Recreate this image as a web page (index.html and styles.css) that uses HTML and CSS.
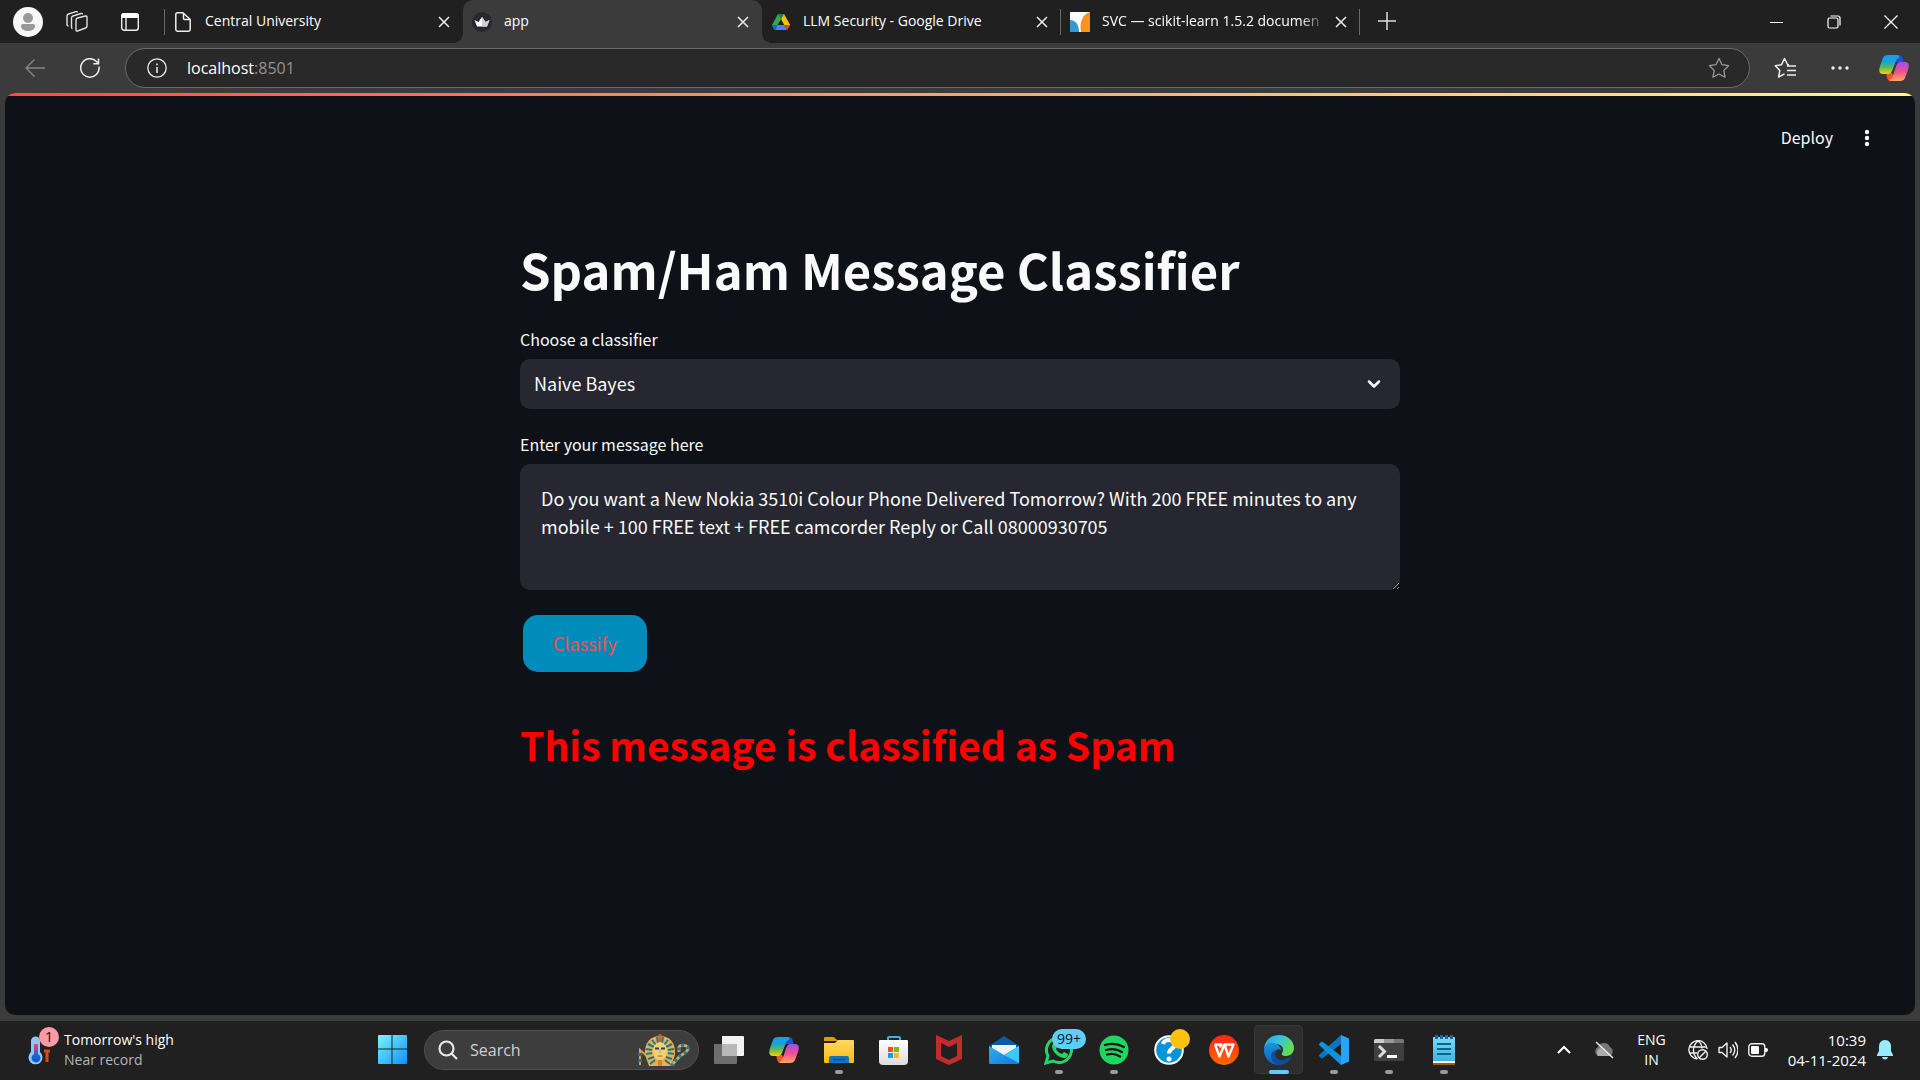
FILE: index.html
```html
<!DOCTYPE html>
<html lang="en">
<head>
<meta charset="utf-8">
<title>app</title>
<link rel="stylesheet" href="styles.css">
</head>
<body>
<svg class="defs" width="0" height="0" aria-hidden="true">
  <defs>
    <linearGradient id="cpLeft" x1="0" y1="0" x2="0" y2="1"><stop offset="0" stop-color="#1d9bf0"/><stop offset=".35" stop-color="#16a3d8"/><stop offset=".65" stop-color="#5cb85a"/><stop offset="1" stop-color="#ffd000"/></linearGradient>
    <linearGradient id="cpRight" x1="0" y1="0" x2="0" y2="1"><stop offset="0" stop-color="#a34df0"/><stop offset=".5" stop-color="#ee5090"/><stop offset="1" stop-color="#ffa860"/></linearGradient>
    <linearGradient id="win" x1="0" y1="0" x2="1" y2="1"><stop offset="0" stop-color="#7df3ff"/><stop offset="1" stop-color="#0a93ff"/></linearGradient>
    <linearGradient id="folder" x1="0" y1="0" x2="0" y2="1"><stop offset="0" stop-color="#ffd95e"/><stop offset="1" stop-color="#fdb813"/></linearGradient>
    <linearGradient id="bag" x1="0" y1="0" x2="0" y2="1"><stop offset="0" stop-color="#fff"/><stop offset="1" stop-color="#dcdcdc"/></linearGradient>
    <linearGradient id="mail" x1="0" y1="0" x2="1" y2="1"><stop offset="0" stop-color="#2bb0f0"/><stop offset="1" stop-color="#1677d8"/></linearGradient>
    <linearGradient id="wps" x1="0" y1="0" x2="0" y2="1"><stop offset="0" stop-color="#ff2416"/><stop offset="1" stop-color="#ff6a00"/></linearGradient>
    <linearGradient id="edgeTop" x1="0" y1="0" x2="1" y2=".5"><stop offset="0" stop-color="#2a9fe6"/><stop offset=".5" stop-color="#35c3df"/><stop offset="1" stop-color="#65dd4e"/></linearGradient>
    <linearGradient id="edgeLow" x1="0" y1="0" x2="0" y2="1"><stop offset="0" stop-color="#1b94e0"/><stop offset="1" stop-color="#0b62bd"/></linearGradient>
    <linearGradient id="note" x1="0" y1="0" x2="0" y2="1"><stop offset="0" stop-color="#78dcf5"/><stop offset="1" stop-color="#3fb4dc"/></linearGradient>
    <linearGradient id="thermo" x1="0" y1="0" x2="0" y2="1"><stop offset="0" stop-color="#ff4068"/><stop offset=".6" stop-color="#1767d8"/><stop offset="1" stop-color="#0a58cc"/></linearGradient>
    <symbol id="copilot" viewBox="0 0 30 28">
      <path fill="#f0562c" d="M7 18l6 1 4 8h-6c-2 0-3-2-4-9z"/>
      <path fill="#1558d6" d="M15 1h5c3 0 3.500 2 4.500 7h-7l-4 2z"/>
      <path fill="url(#cpLeft)" d="M9 1h9c2 0 2.500 1 2 3-2 .500-3 2-3.500 4L13 17c-1 2-2 3-4 3H4c-4 0-4.500-3-3-8l3-8c1-2.300 2.500-3 5-3z"/>
      <path fill="url(#cpRight)" d="M21 27h-9c-1 0-1.500-.5-1-1.500 2-.5 2.500-2 3-4L17.500 11c1-2 2-3 4-3H26c4 0 4.500 3 3 8l-3 8c-1 2.300-2.500 3-5 3z"/>
    </symbol>
    <symbol id="cross" viewBox="0 0 20 20"><path d="M5 5l10 10M15 5L5 15" fill="none" stroke="#eee" stroke-width="1.500"/></symbol>
  </defs>
</svg>

<header class="tabstrip">
  <div class="strip-tools">
    <button class="icon-btn" aria-label="Profile"><svg width="30" height="30" viewBox="0 0 30 30"><circle cx="15" cy="15" r="15" fill="#f7f7f7"/><circle cx="15" cy="11" r="5" fill="#999"/><path d="M8 19q0-2 2-2h10q2 0 2 2c0 3-3 5-7 5s-7-2-7-5z" fill="#999"/></svg></button>
    <button class="icon-btn" aria-label="Workspaces"><svg width="22" height="22" viewBox="0 0 22 22" fill="none" stroke="#e0e0e0" stroke-width="1.400" stroke-linejoin="round"><path d="M10 9q0-1.500 1.500-2l8-2q1.500-.3 1.500 1v9q0 1.500-1.500 2l-8 3q-1.500.5-1.500-1z"/><path d="M6.500 17.500q-1 0-1-1.500V7q0-1.500 1.500-2l8-2.500q1.500-.5 1.500 1M2.500 15q-1.500 0-1.500-1.500V5q0-1.500 1.500-2l7.500-2.300q1.500-.3 1.500.8"/></svg></button>
    <button class="icon-btn" aria-label="Tab actions"><svg width="20" height="20" viewBox="0 0 20 20"><rect x="1.700" y="1.700" width="16.600" height="16.600" rx="2.500" fill="none" stroke="#eee" stroke-width="1.400"/><path d="M1 6V4q0-3 3-3h12q3 0 3 3v2z" fill="#fff"/><path d="M6 6v12" stroke="#eee" stroke-width="1.400"/></svg></button>
  </div>
  <div class="tab ruled-left">
    <svg class="tab-icon" viewBox="0 0 20 20" fill="none" stroke="#eee" stroke-width="1.500" stroke-linejoin="round"><path d="M10 .8H4.500Q2.800.8 2.800 2.500v15q0 1.700 1.700 1.700h11q1.700 0 1.700-1.700V7.500zM10.500.8v5.500q0 1.200 1.200 1.200h5.500"/></svg>
    <span class="tab-title">Central University</span>
    <button class="icon-btn" aria-label="Close tab"><svg width="20" height="20"><use href="#cross"/></svg></button>
  </div>
  <div class="tab active">
    <svg class="tab-icon" viewBox="0 0 20 20"><circle cx="10" cy="10" r="10" fill="#262730"/><path d="M2.500 8l4 2L10 5l3.500 5 4-2-2.500 6.500H5z" fill="#fff"/><path d="M10 5l3.500 5 4-2-2.500 6.500h-5z" fill="#cfcfcf"/></svg>
    <span class="tab-title">app</span>
    <button class="icon-btn" aria-label="Close tab"><svg width="20" height="20"><use href="#cross"/></svg></button>
  </div>
  <div class="tab ruled">
    <svg class="tab-icon" viewBox="0 0 20 20"><path fill="#34a853" d="M7 2h6L6 14l-2.800 4L1 13z"/><path fill="#188038" d="M7 2h6l-3 5z"/><path fill="#fbbc04" d="M13 2l6.200 11h-6L10 7z"/><path fill="#4285f4" d="M6.500 13h7l2.500 5H4z"/><path fill="#ea4335" d="M13.500 13h5.700l-2.800 5z"/><path fill="#1967d2" d="M6.500 13L3.600 18 1 13z"/></svg>
    <span class="tab-title">LLM Security - Google Drive</span>
    <button class="icon-btn" aria-label="Close tab"><svg width="20" height="20"><use href="#cross"/></svg></button>
  </div>
  <div class="tab ruled">
    <svg class="tab-icon" viewBox="0 0 20 20"><path fill="#fff" d="M0 0h20v20H0z"/><path fill="#3499cd" d="M0 8c5 0 9 4 9 12H0z"/><path fill="#f7931e" d="M20 0v20h-9C9 10 13 2 20 0z"/></svg>
    <span class="tab-title faded">SVC — scikit-learn 1.5.2 documen</span>
    <button class="icon-btn" aria-label="Close tab"><svg width="20" height="20"><use href="#cross"/></svg></button>
  </div>
  <button class="icon-btn new-tab" aria-label="New tab"><svg width="18" height="18" viewBox="0 0 18 18"><path d="M9 0v18M0 9h18" stroke="#ddd" stroke-width="1.500"/></svg></button>
  <div class="window-buttons">
    <button class="icon-btn" aria-label="Minimize"><svg width="14" height="14" viewBox="0 0 14 14"><path d="M0 7.500h13" stroke="#fff"/></svg></button>
    <button class="icon-btn" aria-label="Restore"><svg width="14" height="14" viewBox="0 0 14 14" fill="none" stroke="#fff" stroke-width="1.200"><rect x="1" y="3" width="10" height="10" rx="1.500"/><path d="M3.500 1H11q2 0 2 2v7.500"/></svg></button>
    <button class="icon-btn" aria-label="Close"><svg width="14" height="14" viewBox="0 0 14 14"><path d="M.5.500l13 13M13.500.500l-13 13" stroke="#fff" stroke-width="1.200"/></svg></button>
  </div>
</header>

<nav class="toolbar">
  <button class="icon-btn tool" aria-label="Back"><svg width="20" height="18" viewBox="0 0 20 18" fill="none" stroke="#858585" stroke-width="1.400"><path d="M20 9H1M9.500.5L1 9l8.500 8.500"/></svg></button>
  <button class="icon-btn tool" aria-label="Refresh"><svg width="20" height="20" viewBox="0 0 20 20" fill="none" stroke="#eee" stroke-width="1.500"><path d="M19 8.500A9.200 9.200 0 1 1 16.500 3.500L18.500 5.500M18.500.5v5.200h-5.200"/></svg></button>
  <div class="address">
    <svg width="20" height="20" viewBox="0 0 20 20" fill="none" stroke="#eee" stroke-width="1.300"><circle cx="10" cy="10" r="9.200"/><path d="M10 9v6M10 5.500v1.800" stroke-width="1.500"/></svg>
    <a class="url" href="#app">localhost<span class="port">:8501</span></a>
    <button class="icon-btn" aria-label="Add to favorites"><svg width="22" height="22" viewBox="0 0 22 22" fill="none" stroke="#9a9a9a" stroke-width="1.300" stroke-linejoin="round"><path d="M11 1.500l3 6.200 6.600 1-4.800 4.700 1.200 6.800-6-3.200-6 3.200 1.200-6.800L1.400 8.700l6.600-1z"/></svg></button>
  </div>
  <button class="icon-btn tool" aria-label="Favorites"><svg width="22" height="22" viewBox="0 0 22 22" fill="none" stroke="#eee" stroke-width="1.500" stroke-linejoin="round"><path d="M15 8L13.500 7.500 10.500 1.500 7.500 7.700l-6.200 1 4.500 4.700L4.600 20l5.900-3.200M13 9h9M13 13.500h9M13 18h9"/></svg></button>
  <button class="icon-btn tool" aria-label="Settings and more"><svg width="18" height="4" viewBox="0 0 18 4" fill="#eee"><circle cx="2" cy="2" r="1.700"/><circle cx="9" cy="2" r="1.700"/><circle cx="16" cy="2" r="1.700"/></svg></button>
  <button class="icon-btn tool" aria-label="Copilot"><svg width="30" height="28"><use href="#copilot"/></svg></button>
</nav>

<div class="frame">
  <main class="app" id="app">
    <div class="app-header">
      <button class="deploy">Deploy</button>
      <button class="icon-btn" aria-label="Main menu"><svg width="20" height="20" viewBox="0 0 20 20" fill="#fafafa"><circle cx="10" cy="4" r="2.200"/><circle cx="10" cy="10" r="2.200"/><circle cx="10" cy="16" r="2.200"/></svg></button>
    </div>
    <form class="block" onsubmit="return false">
      <h1>Spam/Ham Message Classifier</h1>
      <label for="classifier">Choose a classifier</label>
      <div class="select-wrap">
        <select id="classifier"><option>Naive Bayes</option></select>
        <svg width="14" height="10" viewBox="0 0 14 10" fill="none" stroke="#fafafa" stroke-width="2.500" stroke-linecap="round" stroke-linejoin="round"><path d="M2 2.500l5 5 5-5"/></svg>
      </div>
      <label for="message">Enter your message here</label>
      <textarea id="message" spellcheck="false">Do you want a New Nokia 3510i Colour Phone Delivered Tomorrow? With 200 FREE minutes to any mobile + 100 FREE text + FREE camcorder Reply or Call 08000930705</textarea>
      <button class="classify">Classify</button>
      <h2>This message is classified as Spam</h2>
    </form>
  </main>
</div>

<footer class="taskbar">
  <div class="weather">
    <div class="weather-icon">
      <svg width="22" height="30" viewBox="0 0 22 30"><path d="M16 16h6M19 16v11" stroke="#d9480f" stroke-width="3"/><path d="M3 6a4.500 4.500 0 0 1 9 0v11a7 7 0 1 1-9 0z" fill="#8fc8f8"/><path d="M6 9h4v10a4.500 4.500 0 1 1-4 0z" fill="url(#thermo)"/></svg>
      <span class="count">1</span>
    </div>
    <div class="weather-text"><span>Tomorrow's high</span><span class="dim">Near record</span></div>
  </div>
  <div class="apps">
    <button class="app-btn" aria-label="Start"><svg width="30" height="30" viewBox="1 1 30 30" fill="url(#win)"><path d="M1 2q0-1 1-1h12.500v13.500H1zM15.500 1H29q1 0 1 1v12.500H15.500zM1 15.500h13.500V30H2q-1 0-1-1zM15.500 15.500H30V29q0 1-1 1H15.500z"/></svg></button>
    <div class="search">
      <svg width="20" height="20" viewBox="0 0 20 20" fill="none" stroke="#e5e9ec" stroke-width="2.200"><circle cx="8.500" cy="8.500" r="7"/><path d="M13.500 13.500l5.500 5.500"/></svg>
      <input type="text" placeholder="Search" aria-label="Search">
      <svg width="52" height="32" viewBox="0 0 52 32">
        <path d="M2 31V16l14 12" fill="none" stroke="#d7a04f" stroke-width="2"/><path d="M2 19v12" stroke="#23708b" stroke-width="4" stroke-dasharray="3 3"/>
        <path d="M7 21C6 8 13 2 22 2s16 6 15 19l-4 11H11z" fill="#e8b04a"/>
        <path d="M8 15l6 1M8 20l6-1M10 10l6 3M14 6l4 5M19 3l1 6M25 3l-1 6M30 6l-4 5M34 10l-6 3M36 15l-6 1M36 20l-6-1M10 25l6-2M34 25l-6-2M12 30l5-4M32 30l-5-4" stroke="#167898" stroke-width="2"/>
        <ellipse cx="22" cy="17" rx="7" ry="9" fill="#f4cf7b"/><path d="M17 14.500h4M23 14.500h4" stroke="#274451" stroke-width="2"/><path d="M19.500 22h5" stroke="#a86528"/><path d="M22 16v3" stroke="#c89242"/><path d="M20.500 0h3v8h-3z" fill="#c85c32"/><path d="M20 26h4v6h-4z" fill="#c98a32"/>
        <path d="M33 32l8-9c3-3 8-4 9-8 0-4-7-5-9-2v5" fill="none" stroke="#dba64f" stroke-width="3"/><path d="M33 32l8-9c3-3 8-4 9-8 0-4-7-5-9-2v5" fill="none" stroke="#16809e" stroke-width="3" stroke-dasharray="3 3"/>
      </svg>
    </div>
    <button class="app-btn" aria-label="Task view"><svg width="30" height="30" viewBox="0 0 30 30"><path d="M8 1h21q1 0 1 1v18q0 1-1 1H8z" fill="#f2f2f2"/><rect y="9" width="23" height="20" rx="1" fill="#777" opacity=".9"/><path d="M8 9h15v12H8z" fill="#b8b8b8"/></svg></button>
    <button class="app-btn" aria-label="Copilot"><svg width="30" height="28"><use href="#copilot"/></svg></button>
    <button class="app-btn running" aria-label="File Explorer"><svg width="30" height="30" viewBox="0 0 30 30"><path d="M0 3q0-1 1-1h8q1 0 2 1l3 3H0z" fill="#dd9b07"/><path d="M0 8h11l3-3h15q1 0 1 1v21q0 1-1 1H1q-1 0-1-1z" fill="url(#folder)"/><path d="M5 28v-5q0-2 2-2h16q2 0 2 2v5z" fill="#1173c7"/><path d="M9 24.500h12" stroke="#084e91" stroke-width="1.500"/></svg></button>
    <button class="app-btn" aria-label="Microsoft Store"><svg width="30" height="30" viewBox="0 0 30 30"><path d="M9 6V2.500Q9 2 10 2h10q1 0 1 .5V6" fill="none" stroke="#2fb5e8" stroke-width="2"/><path d="M0 6q0-1 1-1h27q1 0 1 1v20q0 4-4 4H4q-4 0-4-4z" fill="url(#bag)"/><path fill="#f25022" d="M9 12h5v5H9z"/><path fill="#7fba00" d="M15 12h5v5h-5z"/><path fill="#00a4ef" d="M9 18h5v5H9z"/><path fill="#ffb900" d="M15 18h5v5h-5z"/></svg></button>
    <button class="app-btn" aria-label="McAfee"><svg width="30" height="30" viewBox="0 0 30 30"><path fill="#c42b2b" fill-rule="evenodd" d="M2 0l13 6 13-6v24l-13 6-13-6zM7 8v13l8 4 8-4V8l-8 4z"/></svg></button>
    <button class="app-btn" aria-label="Mail"><svg width="30" height="30" viewBox="0 0 30 30"><path d="M0 11L15 1l15 10v5H0z" fill="#0c59a4"/><path d="M3 10h24v10H3z" fill="#f2f2f2"/><path d="M0 11l15 9 15-9v17q0 1-1 1H1q-1 0-1-1z" fill="url(#mail)"/><path d="M15 20l15-9v17z" fill="#3cc8f4"/></svg></button>
    <button class="app-btn running" aria-label="WhatsApp"><svg width="30" height="30" viewBox="0 0 30 30"><path d="M2 28l2-7a12.500 12.500 0 1 1 5 5z" fill="none" stroke="#25d366" stroke-width="3"/><path d="M10 8l3 4-1 2q2 4 6 5l2-2 4 2q0 4-4 4C13 22 8 16 8 11q0-2 2-3z" fill="#25d366"/></svg><span class="pill">99+</span></button>
    <button class="app-btn running" aria-label="Spotify"><svg width="30" height="30" viewBox="0 0 30 30"><circle cx="15" cy="15" r="14.500" fill="#1ed760"/><path d="M6 10q10-3 19 2M7 15q9-2.500 16 2M8 19.500q7-2 13 2" fill="none" stroke="#111" stroke-width="2.300" stroke-linecap="round"/></svg></button>
    <button class="app-btn" aria-label="Get Help"><svg width="30" height="30" viewBox="0 0 30 30"><circle cx="15" cy="15" r="13.800" fill="#0795d8" stroke="#fff" stroke-width="2"/><path d="M9 9q1-4 6-4c6 0 7 6 3 8.500-2 1.300-3 2-3 5" fill="none" stroke="#fff" stroke-width="4"/><circle cx="15" cy="24" r="2.500" fill="#fff"/></svg><span class="dot"></span></button>
    <button class="app-btn" aria-label="WPS Office"><svg width="30" height="30" viewBox="0 0 30 30"><circle cx="15" cy="15" r="15" fill="url(#wps)"/><path d="M5.500 9.500h7l-1.500 3M6 9.500l4.500 12 5-12 4 12 5-12h-9" fill="none" stroke="#fff" stroke-width="2.400" stroke-linejoin="round"/></svg></button>
    <button class="app-btn current" aria-label="Microsoft Edge"><svg width="30" height="30" viewBox="0 0 30 30"><path d="M0 14C1 5 7 0 15 0c9 0 15 6 15 13 0 5-4 8-8 8-3 0-5-1-4-3 3-5-1-9-6-9C6 9 1 11 0 14z" fill="url(#edgeTop)"/><path d="M0 15C1 8 6 7 10 8c4 1 7 4 7 7-3-2-6 0-6 4 0 5 5 8 10 8-2 2-4 3-6 3C6 30 0 23 0 15z" fill="url(#edgeLow)"/><path d="M12 15c-3 6 3 13 10 9l6-2c-3 5-8 8-13 8-5-1-8-5-8-9 0-3 2-5 5-6z" fill="#0c4f99"/></svg></button>
    <button class="app-btn running" aria-label="Visual Studio Code"><svg width="30" height="30" viewBox="0 0 30 30"><path d="M22 0v9L4 23q-1 .8-2 0l-1.500-1.500q-1-1 0-2z" fill="#0877bd"/><path d="M22 30v-9L4 7Q3 6.200 2 7L.5 8.500q-1 1 0 2z" fill="#1190dc"/><path d="M22 0l8 3.500v23L22 30z" fill="#27a5f2"/></svg></button>
    <button class="app-btn running" aria-label="Terminal"><svg width="30" height="30" viewBox="0 0 30 30"><rect y="4" width="30" height="22" rx="1.500" fill="#404040"/><path d="M0 8V5.500Q0 4 1.500 4H10v4z" fill="#ccc"/><path d="M10 4h10v4H10z" fill="#999"/><path d="M20 4h8.500Q30 4 30 5.500V8H20z" fill="#777"/><path d="M5 11l5.500 5.500L5 22" fill="none" stroke="#ddd" stroke-width="3"/><path d="M13 21.500h10" stroke="#fff" stroke-width="3"/></svg></button>
    <button class="app-btn running" aria-label="Notepad"><svg width="30" height="30" viewBox="0 0 30 30"><path d="M4 27h22v3H4z" fill="#a9560c"/><path d="M4 25h22v3H4z" fill="#f5f5f5"/><path d="M4 2h22v24H4z" fill="url(#note)"/><path d="M8 9h14M8 14h14M8 19h14" stroke="#0b638c" stroke-width="2"/><path d="M7.500 0v4M12.500 0v4M17.500 0v4M22.500 0v4" stroke="#126e98" stroke-width="3"/></svg></button>
  </div>
  <div class="tray">
    <button class="icon-btn" aria-label="Show hidden icons"><svg width="14" height="10" viewBox="0 0 14 10"><path d="M1 8l6-6 6 6" fill="none" stroke="#fff" stroke-width="2"/></svg></button>
    <svg class="cloud" width="22" height="18" viewBox="0 0 22 18"><path d="M5 15a5 5 0 0 1 0-9 6.500 6.500 0 0 1 12 0 5 5 0 0 1 0 9z" fill="#777"/><path d="M5 15a5 5 0 0 1 3-8l9 8z" fill="#aaa"/><path d="M3 1l17 16" stroke="#eee" stroke-width="1.500"/></svg>
    <button class="lang"><span>ENG</span><span>IN</span></button>
    <div class="status">
      <svg width="20" height="20" viewBox="0 0 20 20" fill="none" stroke="#eee" stroke-width="1.400"><path d="M9.500 19A9.200 9.200 0 1 1 19.200 9M1.500 7h17M1.500 13H9M9.500 19C4 14 4 6 10 1c3 2 4 5 4 7.500"/><circle cx="14.500" cy="14.500" r="4.800"/><path d="M11 18l7-7"/></svg>
      <svg width="20" height="20" viewBox="0 0 20 20" fill="none" stroke="#eee" stroke-width="1.400" stroke-linejoin="round"><path d="M1 7.500h3L9 3v14l-5-4.500H1zM12 7q2.500 3 0 6M14.500 4.500q4.500 5.500 0 11M17 2q6 8 0 16"/></svg>
      <svg width="20" height="14" viewBox="0 0 20 14"><rect x=".8" y=".8" width="16" height="12.400" rx="3" fill="none" stroke="#eee" stroke-width="1.400"/><rect x="3" y="3" width="8" height="8" rx="1" fill="#fff"/><path d="M17 5h1q2 0 2 2t-2 2h-1z" fill="#fff"/></svg>
    </div>
    <button class="clock"><span>10:39</span><span>04-11-2024</span></button>
    <button class="icon-btn" aria-label="Notifications"><svg width="16" height="20" viewBox="0 0 16 20" fill="#99ebff"><path d="M8 0C4 0 2 3 2 6.500V11L0 15v1h16v-1l-2-4V6.500C14 3 12 0 8 0zM5 17h6q-.5 2.500-3 2.500T5 17z"/></svg></button>
  </div>
</footer>
</body>
</html>
```
FILE: styles.css
```css
* { box-sizing: border-box; }

body {
  margin: 0;
  min-height: 100vh;
  display: flex;
  flex-direction: column;
  background: #3b3b3b;
  color: #fff;
  font-family: "Open Sans", "Noto Sans", sans-serif;
  font-size: 14px;
  color-scheme: dark;
}

button {
  margin: 0;
  padding: 0;
  border: 0;
  background: none;
  color: inherit;
  font: inherit;
}

svg { display: block; flex: none; }
.defs { position: absolute; }

.icon-btn {
  display: flex;
  align-items: center;
  justify-content: center;
  flex: none;
}

/* Tab strip */
.tabstrip {
  display: flex;
  height: 43px;
  background: #202020;
}

.strip-tools {
  display: flex;
  align-items: center;
  flex: 0 0 164px;
  padding-left: 13px;
}

.strip-tools .icon-btn { height: 43px; }
.strip-tools .icon-btn + .icon-btn { width: 53px; }
.strip-tools .icon-btn:nth-child(2) { margin-left: 7px; }

.tab {
  position: relative;
  display: flex;
  align-items: center;
  gap: 12px;
  flex: 0 1 299px;
  min-width: 0;
  padding: 0 9px;
}

.tab.ruled::after,
.tab.ruled-left::before {
  content: "";
  position: absolute;
  top: 9px;
  right: 0;
  width: 1px;
  height: 26px;
  background: #6a6a6a;
}

.tab.ruled-left::before { right: auto; left: 0; }
.tab-icon { width: 20px; height: 20px; }

.tab-title {
  flex: 1;
  min-width: 0;
  padding-bottom: 2px;
  overflow: hidden;
  white-space: nowrap;
  line-height: 20px;
}

.tab-title.faded {
  margin-right: -8px;
  mask-image: linear-gradient(to right, #000 88%, transparent);
}

.tab.active {
  background: #3b3b3b;
  border-radius: 10px 10px 0 0;
}

.tab.active::before,
.tab.active::after {
  content: "";
  position: absolute;
  bottom: 0;
  width: 10px;
  height: 10px;
}

.tab.active::before {
  right: 100%;
  background: radial-gradient(circle at 0 0, transparent 10px, #3b3b3b 10px);
}

.tab.active::after {
  left: 100%;
  background: radial-gradient(circle at 100% 0, transparent 10px, #3b3b3b 10px);
}

.new-tab { width: 54px; padding-bottom: 1px; }
.window-buttons { display: flex; margin-left: auto; padding-right: 1px; }
.window-buttons .icon-btn { width: 57px; }

/* Toolbar */
.toolbar {
  display: flex;
  align-items: center;
  height: 50px;
  padding: 0 0 0 7px;
}

.tool { width: 55px; height: 40px; }
.tool:last-child { width: 53px; }

.address {
  display: flex;
  align-items: center;
  gap: 20px;
  flex: 1;
  height: 40px;
  margin: 0 7px 0 8px;
  padding: 0 19px 0 21px;
  border: 1px solid #6b6b6b;
  border-radius: 20px;
  background: #292929;
}

.url {
  flex: 1;
  color: #fff;
  font-size: 16px;
  text-decoration: none;
}

.port { color: #929292; }

/* Page shown in the browser */
.frame {
  display: flex;
  flex: 1;
  padding: 0 5px 6px;
}

.app {
  position: relative;
  flex: 1;
  overflow: hidden;
  border-radius: 10px;
  background: #0e1117;
  color: #fafafa;
  font-family: "Noto Sans CJK SC", sans-serif;
}

.app::before {
  content: "";
  display: block;
  height: 3px;
  background: linear-gradient(to right, #ff4b4b, #fffd80);
}

.app-header {
  display: flex;
  align-items: center;
  justify-content: flex-end;
  gap: 24px;
  height: 84px;
  padding-right: 38px;
}

.deploy { padding-bottom: 2px; font-size: 16px; }

.block {
  display: flex;
  flex-direction: column;
  width: 880px;
  max-width: 100%;
  margin: 56px auto 0;
}

h1, h2 { margin: 0; }

h1 {
  margin-bottom: 2px;
  font-size: 49px;
  line-height: 66px;
  font-weight: 700;
}

label {
  margin-top: 22px;
  font-size: 16px;
  line-height: 26px;
}

.select-wrap {
  position: relative;
  margin: 7px 0 0;
}

select {
  display: block;
  width: 100%;
  height: 50px;
  padding: 0 14px 2px;
  border: 0;
  border-radius: 10px;
  appearance: none;
  background: #262730;
  color: #fafafa;
  font-family: inherit;
  font-size: 18px;
}

.select-wrap svg {
  position: absolute;
  top: 20px;
  right: 19px;
  pointer-events: none;
}

textarea {
  height: 126px;
  margin: 7px 0 0;
  padding: 20px 21px;
  border: 0;
  border-radius: 10px;
  background: #262730;
  color: #fafafa;
  font-family: inherit;
  font-size: 18px;
  line-height: 28px;
  resize: vertical;
}

.classify {
  align-self: flex-start;
  height: 57px;
  margin: 25px 3px;
  padding: 0 30px 2px;
  border-radius: 15px;
  background: #008cba;
  color: #ff4b4b;
  font-size: 18px;
}

h2 {
  margin-top: 20px;
  color: #f00;
  font-size: 39px;
  line-height: 54px;
  font-weight: 600;
}

/* Taskbar */
.taskbar {
  display: flex;
  align-items: center;
  height: 59px;
  padding-bottom: 2px;
  background: #202020;
}

.weather {
  display: flex;
  align-items: center;
  gap: 14px;
  flex: 0 0 365px;
  padding-left: 28px;
}

.weather-icon { position: relative; }
.weather-text { display: flex; flex-direction: column; line-height: 20px; }
.dim { color: #b5b5b5; }

.count {
  position: absolute;
  top: -8px;
  left: 11px;
  width: 20px;
  border-radius: 10px;
  background: #ff99a4;
  color: #111;
  line-height: 20px;
  text-align: center;
}

.apps { display: flex; align-items: center; }

.app-btn {
  position: relative;
  display: flex;
  align-items: center;
  justify-content: center;
  width: 49px;
  height: 49px;
  margin: 0 3px;
  border-radius: 5px;
}

.app-btn.running::after,
.app-btn.current::after {
  content: "";
  position: absolute;
  bottom: 0;
  width: 8px;
  height: 4px;
  border-radius: 2px;
  background: #9a9a9a;
}

.app-btn.current { background: #2d2d2d; box-shadow: inset 0 0 0 1px #383838; }
.app-btn.current::after { width: 20px; background: #60cdff; }

.search {
  display: flex;
  align-items: center;
  gap: 12px;
  width: 275px;
  height: 40px;
  margin: 0 2px 0 4px;
  padding: 0 8px 0 13px;
  border: 1px solid #505050;
  border-radius: 20px;
  background: #3d3d3d;
}

.search input {
  flex: 1;
  min-width: 0;
  padding: 0;
  border: 0;
  background: none;
  color: #fff;
  font: inherit;
  font-size: 16px;
}

.search input::placeholder { color: #d0d0d0; opacity: 1; }

.pill {
  position: absolute;
  top: 4px;
  left: 18px;
  width: 34px;
  border-radius: 10px;
  background: #60cdff;
  color: #111;
  line-height: 20px;
  text-align: center;
}

.dot {
  position: absolute;
  top: 4px;
  right: 3px;
  width: 20px;
  height: 20px;
  border-radius: 50%;
  background: #ffc20e;
}

.tray {
  display: flex;
  align-items: center;
  margin-left: auto;
  padding-right: 27px;
}

.cloud { margin: 0 22px; }

.lang, .clock {
  display: flex;
  flex-direction: column;
  line-height: 20px;
}

.lang { align-items: center; margin-right: 22px; }
.status { display: flex; align-items: center; gap: 10px; }
.clock { align-items: flex-end; margin: 0 11px 0 20px; font-size: 15px; }
```
